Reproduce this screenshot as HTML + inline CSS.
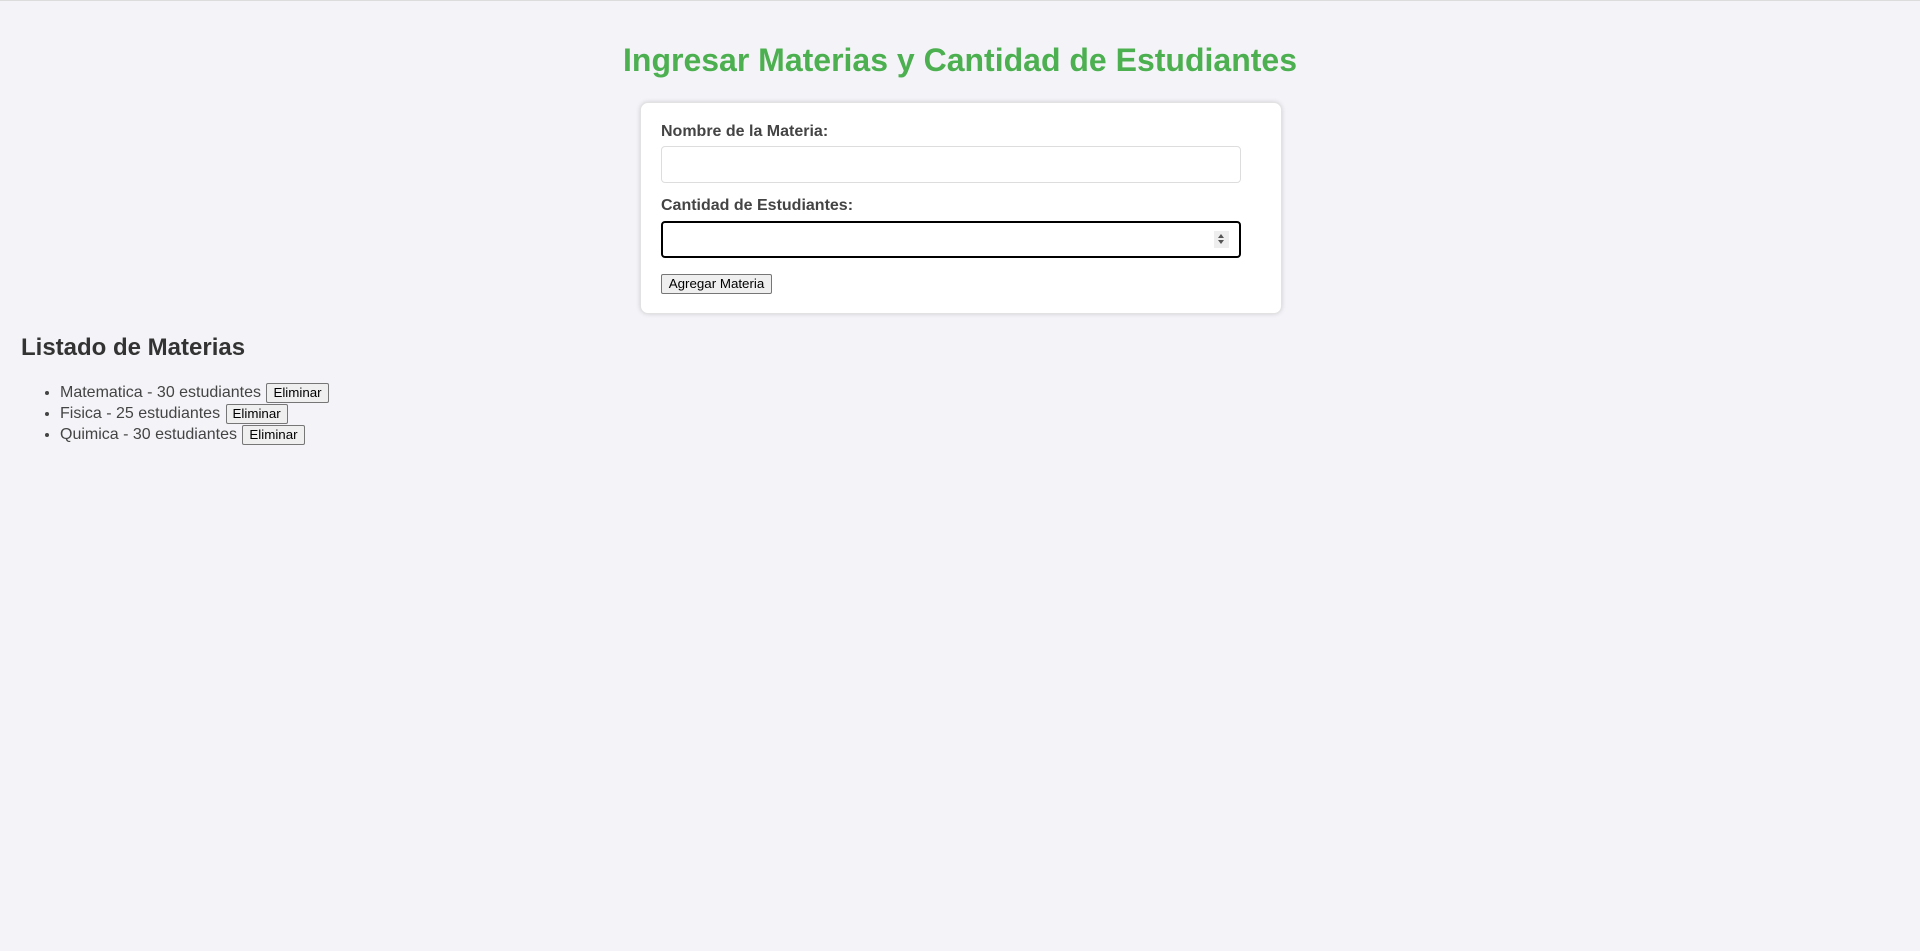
<!DOCTYPE html>
<html><head><meta charset="utf-8"><style>
html,body{margin:0;padding:0;}
body{background:#f4f4f8;font-family:"Liberation Sans",Arial,sans-serif;color:#333;width:1920px;height:951px;border-top:1px solid #dcdcdc;box-sizing:border-box;position:relative;}
h1{position:absolute;top:39px;left:0;width:1920px;text-align:center;margin:0;color:#4caf50;font-size:32px;line-height:40px;font-weight:bold;}
.card{position:absolute;left:640px;top:101px;width:600px;height:210px;padding:0 20px;background:#fff;border-radius:8px;box-shadow:0 0 5px rgba(0,0,0,0.15);border:1px solid #e2e2e2;box-sizing:content-box;}
label{position:absolute;left:20px;font-weight:bold;font-size:16px;color:#444;}
.in{position:absolute;left:20px;width:580px;height:37px;box-sizing:border-box;border:1px solid #ddd;border-radius:4px;background:#fff;}
.in2{border:2px solid #000;}
.spin{position:absolute;right:10px;top:8px;width:15px;height:17px;background:#eee;}
.spin:before{content:"";position:absolute;left:4px;top:3px;border:3.5px solid transparent;border-bottom:4px solid #555;border-top:0;}
.spin:after{content:"";position:absolute;left:4px;top:9px;border:3.5px solid transparent;border-top:4px solid #555;border-bottom:0;}
button{font-family:"Liberation Sans",Arial,sans-serif;font-size:13.33px;background:#efefef;border:1px solid #767676;border-radius:2px;color:#000;padding:1px 6px;line-height:16px;}
.add{position:absolute;left:20px;top:171px;width:111px;height:20px;}
h2{position:absolute;left:21px;top:332px;margin:0;font-size:24px;line-height:30px;font-weight:bold;color:#333;}
ul{position:absolute;left:20px;top:381px;margin:0;padding-left:40px;font-size:16px;line-height:21px;color:#444;}
li button{height:20px;vertical-align:middle;margin-left:1px;}
</style></head><body>
<h1>Ingresar Materias y Cantidad de Estudiantes</h1>
<div class="card">
<label style="top:20px">Nombre de la Materia:</label>
<div class="in" style="top:43px"></div>
<label style="top:94px">Cantidad de Estudiantes:</label>
<div class="in in2" style="top:118px"><div class="spin"></div></div>
<button class="add">Agregar Materia</button>
</div>
<h2>Listado de Materias</h2>
<ul>
<li>Matematica - 30 estudiantes <button>Eliminar</button></li>
<li>Fisica - 25 estudiantes <button>Eliminar</button></li>
<li>Quimica - 30 estudiantes <button>Eliminar</button></li>
</ul>
</body></html>
